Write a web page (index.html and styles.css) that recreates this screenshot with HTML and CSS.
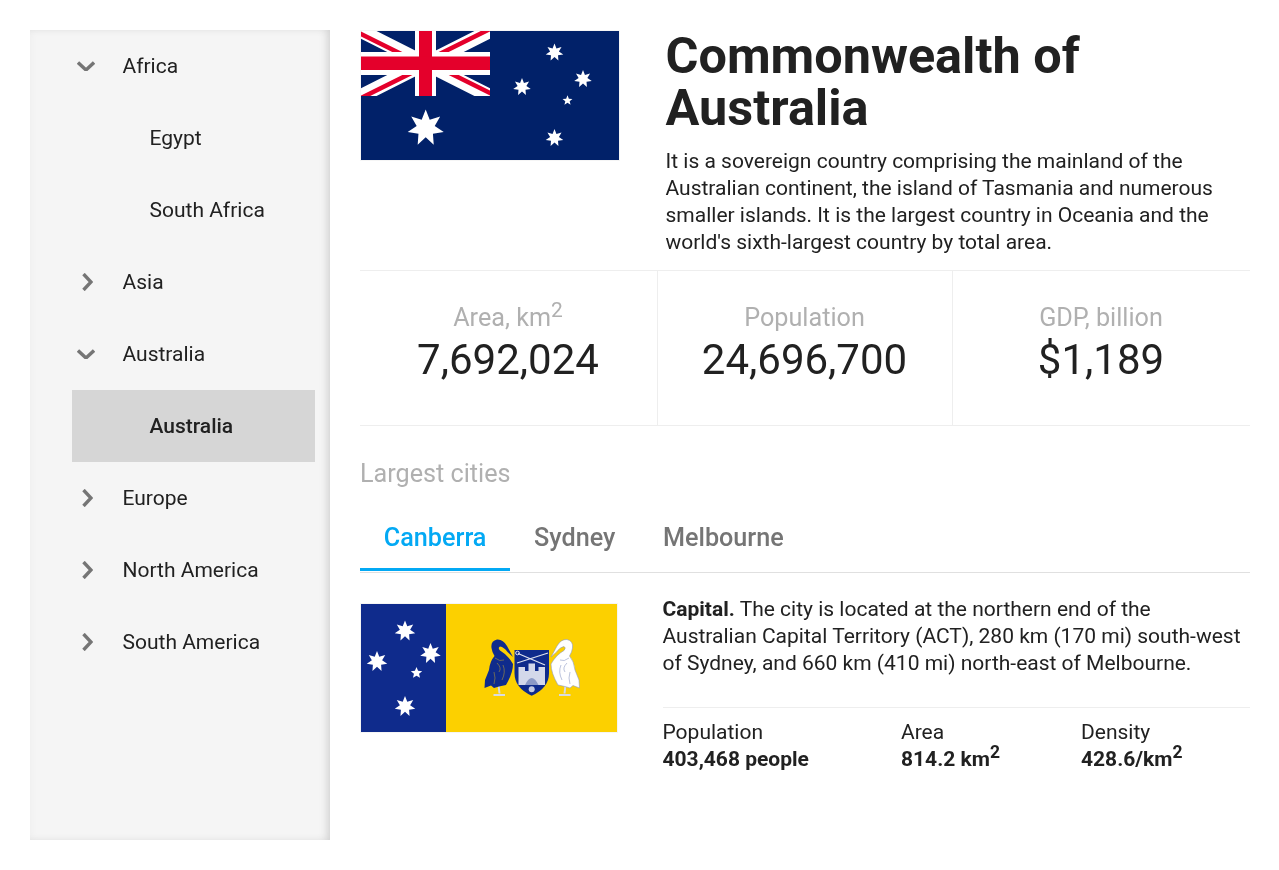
FILE: index.html
```html
<!DOCTYPE html>
<html lang="en">
<head>
<meta charset="utf-8">
<title>Commonwealth of Australia</title>
<link rel="stylesheet" href="styles.css">
</head>
<body>
<svg class="defs" width="0" height="0" aria-hidden="true">
  <defs>
    <polygon id="s7" points="0,-1 .217,-.45 .782,-.623 .488,-.111 .975,.222 .391,.312 .434,.901 0,.5 -.434,.901 -.391,.312 -.975,.222 -.488,-.111 -.782,-.623 -.217,-.45"/>
    <polygon id="s5" points="0,-1 .26,-.36 .951,-.309 .42,.137 .588,.809 0,.44 -.588,.809 -.42,.137 -.951,-.309 -.26,-.36"/>
    <path id="chev-down" d="M1 1.5 L9 9 L17 1.5" fill="none" stroke="#757575" stroke-width="3.4"/>
    <path id="chev-right" d="M1.5 1 L9 9 L1.5 17" fill="none" stroke="#757575" stroke-width="3.4"/>
    <clipPath id="canton"><rect x="361" y="31" width="129" height="65"/></clipPath>
    <path id="swan-body" d="M513 657 L507 646 Q503 639 497 639.5 Q490.5 641 491.5 648 Q492 652 494.5 656 Q490 661 489 670 L485 680 L484.5 688 L491 685.5 L494 688 L499 686.5 L506 685 Q513 673 513 664 Q508 655 500 650.5 Q497.5 647.5 500 646.5 Q504 647 507.5 652 Z"/>
    <path id="swan-lines" d="M495 658 Q500 662 504 660 M497 663 Q502 668 499 672 M503 665 Q506 672 502 680 M494 672 Q496 678 494 684" fill="none"/>
    <path id="swan-legs" d="M498.5 685 L499.5 693.5 M493.5 695 L505 695" fill="none" stroke="#d9dbe0" stroke-width="2"/>
  </defs>
</svg>
<div class="page">
  <nav class="side">
    <div class="row"><svg class="chev" viewBox="0 0 18 10"><use href="#chev-down"/></svg><span>Africa</span></div>
    <div class="row sub"><span>Egypt</span></div>
    <div class="row sub"><span>South Africa</span></div>
    <div class="row"><svg class="chev right" viewBox="0 0 11 18"><use href="#chev-right"/></svg><span>Asia</span></div>
    <div class="row"><svg class="chev" viewBox="0 0 18 10"><use href="#chev-down"/></svg><span>Australia</span></div>
    <div class="row sub selected"><span>Australia</span></div>
    <div class="row"><svg class="chev right" viewBox="0 0 11 18"><use href="#chev-right"/></svg><span>Europe</span></div>
    <div class="row"><svg class="chev right" viewBox="0 0 11 18"><use href="#chev-right"/></svg><span>North America</span></div>
    <div class="row"><svg class="chev right" viewBox="0 0 11 18"><use href="#chev-right"/></svg><span>South America</span></div>
  </nav>
  <main class="main">
    <header class="head">
      <svg class="flag-au" viewBox="360 30 260 131">
        <rect x="360.5" y="30.5" width="259" height="130" fill="#012169" stroke="#f5f5f5"/>
        <g clip-path="url(#canton)">
          <path d="M361 31 L490 96 M490 31 L361 96" stroke="#fff" stroke-width="14"/>
          <path d="M359 33 L425.5 66 M425.5 61 L492 28 M359 99 L425.5 66 M425.5 61 L492 94" stroke="#e4002b" stroke-width="4.6"/>
          <rect x="415" y="31" width="21" height="65" fill="#fff"/>
          <rect x="361" y="52" width="129" height="23" fill="#fff"/>
          <rect x="419" y="31" width="13" height="65" fill="#e4002b"/>
          <rect x="361" y="56.5" width="129" height="13.5" fill="#e4002b"/>
        </g>
        <g fill="#fff">
          <use href="#s7" transform="translate(425.7 128) scale(18.5)"/>
          <use href="#s7" transform="translate(554.5 52.5) scale(9)"/>
          <use href="#s7" transform="translate(583 79) scale(9)"/>
          <use href="#s7" transform="translate(522 87) scale(9)"/>
          <use href="#s5" transform="translate(567.5 100.5) scale(5.2)"/>
          <use href="#s7" transform="translate(554.5 138) scale(9)"/>
        </g>
      </svg>
      <div class="intro">
        <h1>Commonwealth of Australia</h1>
        <p>It is a sovereign country comprising the mainland of the Australian continent, the island of Tasmania and numerous smaller islands. It is the largest country in Oceania and the world's sixth-largest country by total area.</p>
      </div>
    </header>
    <section class="stats">
      <div class="stat"><div class="stat-label">Area, km<sup>2</sup></div><div class="stat-value">7,692,024</div></div>
      <div class="stat"><div class="stat-label">Population</div><div class="stat-value">24,696,700</div></div>
      <div class="stat"><div class="stat-label">GDP, billion</div><div class="stat-value">$1,189</div></div>
    </section>
    <h2 class="cities">Largest cities</h2>
    <div class="tabs">
      <div class="tab active">Canberra</div>
      <div class="tab">Sydney</div>
      <div class="tab">Melbourne</div>
    </div>
    <section class="city">
      <svg class="flag-act" viewBox="360 603 258 130">
        <rect x="360.5" y="603.5" width="257" height="129" fill="#fcd000" stroke="#f5f5f5"/>
        <rect x="361" y="604" width="85" height="128" fill="#0f2b8c"/>
        <g fill="#fff">
          <use href="#s7" transform="translate(405 631) scale(10.5)"/>
          <use href="#s7" transform="translate(377 661.5) scale(10.5)"/>
          <use href="#s7" transform="translate(430.5 653.5) scale(10.5)"/>
          <use href="#s5" transform="translate(416.5 673) scale(6)"/>
          <use href="#s7" transform="translate(405 706.5) scale(10.5)"/>
        </g>
        <g>
          <use href="#swan-legs"/>
          <use href="#swan-body" fill="#0f2b8c"/>
          <use href="#swan-lines" stroke="#a8923a" stroke-width=".6"/>
        </g>
        <g transform="translate(1064 0) scale(-1 1)">
          <use href="#swan-legs"/>
          <use href="#swan-body" fill="#fff" stroke="#8d9ac4" stroke-width=".6"/>
          <use href="#swan-lines" stroke="#8d9ac4" stroke-width=".6"/>
        </g>
        <path d="M514.5 650 H549 V673 Q549 688 531.7 695.7 Q514.5 688 514.5 673 Z" fill="#0f2b8c"/>
        <path d="M518 653.5 L545 665 M548 653 L517 663" stroke="#dfe3ee" stroke-width="1.2"/>
        <circle cx="517.5" cy="653" r="1.8" fill="none" stroke="#dfe3ee"/>
        <path d="M518.5 667 H525 V671 H528.5 V663.5 H535 V671 H538.5 V667 H545 V685 H518.5 Z" fill="#d3d8ea"/>
        <path d="M525 685 Q531.7 671 538.5 685 Z" fill="#8c9ac6"/>
        <circle cx="531.7" cy="689.3" r="3" fill="#c3cae2"/>
      </svg>
      <div class="city-info">
        <p class="city-text"><strong>Capital.</strong> The city is located at the northern end of the Australian Capital Territory (ACT), 280 km (170 mi) south-west of Sydney, and 660 km (410 mi) north-east of Melbourne.</p>
        <div class="facts">
          <div class="fact f1"><div>Population</div><strong>403,468 people</strong></div>
          <div class="fact f2"><div>Area</div><strong>814.2 km<sup>2</sup></strong></div>
          <div class="fact"><div>Density</div><strong>428.6/km<sup>2</sup></strong></div>
        </div>
      </div>
    </section>
  </main>
</div>
</body>
</html>
```
FILE: styles.css
```css
* { box-sizing: border-box; }
html, body { margin: 0; padding: 0; }
body { font-family: Roboto, "Liberation Sans", sans-serif; color: #212121; background: #fff; }
.defs { position: absolute; }
.page { display: flex; gap: 30px; padding: 30px 29px 30px 30px; height: 870px; will-change: transform; }
.side { width: 300px; flex: none; height: 810px; background: #f5f5f5; padding-left: 42px; padding-right: 15px;
  box-shadow: inset 0 0 8px rgba(0,0,0,.04), inset -6px 0 8px -3px rgba(0,0,0,.12); }
.row { position: relative; height: 72px; display: flex; align-items: center; padding-left: 50.5px; font-size: 21px; }
.row.sub { padding-left: 77.5px; }
.row.selected { background: #d6d6d6; font-weight: 500; }
.chev { position: absolute; left: 5px; top: 31px; width: 18px; height: 10px; }
.chev.right { left: 9.5px; top: 27px; width: 11px; height: 18px; }
.main { flex: 1; min-width: 0; }
.head { display: flex; gap: 45.5px; height: 240px; }
.flag-au { width: 260px; height: 131px; flex: none; display: block; }
.intro { flex: 1; }
h1 { margin: 0; font-size: 50.4px; line-height: 52px; font-weight: 700; }
.intro p { margin: 14px 0 0; font-size: 21px; line-height: 27px; }
.stats { display: grid; grid-template-columns: 297px 295px 298px; height: 156px; border-top: 1px solid #eee; border-bottom: 1px solid #eee; }
.stat { text-align: center; padding: 29px 1px 0 0; }
.stat + .stat { border-left: 1px solid #eee; }
.stat-label { font-size: 25.2px; line-height: 36px; color: #b0b0b0; height: 35px; }
.stat-label sup { font-size: 21px; line-height: 0; }
.stat-value { font-size: 42px; line-height: 50px; }
.cities { margin: 30px 0 0; padding-left: 0; font-size: 25.2px; line-height: 36px; font-weight: 400; color: #b0b0b0; }
.tabs { display: flex; margin-top: 15px; border-bottom: 1px solid #e0e0e0; height: 66px; }
.tab { height: 65px; padding: 0 23.8px; font-size: 25.2px; font-weight: 500; line-height: 62px; color: #757575; }
.tab.active { color: #03a9f4; border-bottom: 3px solid #03a9f4; height: 64px; }
.city { display: flex; gap: 44.5px; margin-top: 30px; }
.flag-act { width: 258px; height: 130px; flex: none; display: block; }
.city-info { flex: 1; margin-top: -7px; }
.city-text { margin: 0; font-size: 21px; line-height: 27px; padding-bottom: 30px; border-bottom: 1px solid #eee; }
.facts { display: flex; font-size: 21px; line-height: 27px; margin-top: 11px; }
.fact strong { font-weight: 700; }
.fact sup { font-size: 17.5px; line-height: 0; }
.f1 { width: 238.5px; }
.f2 { width: 180px; }
```
